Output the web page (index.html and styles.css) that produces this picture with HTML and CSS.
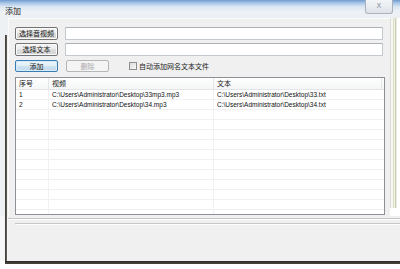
FILE: index.html
```html
<!DOCTYPE html>
<html lang="zh">
<head>
<meta charset="utf-8">
<link rel="stylesheet" href="styles.css">
</head>
<body>
<div class="screen">
  <div class="titlebar">
    <span class="title">添加</span>
    <div class="close">X</div>
  </div>
  <div class="body-row">
    <div class="frame-left"><div class="edge"></div></div>
    <div class="client">
      <div class="row">
        <div class="btn">选择音视频</div>
        <div class="input"></div>
      </div>
      <div class="row">
        <div class="btn">选择文本</div>
        <div class="input"></div>
      </div>
      <div class="row row-actions">
        <div class="btn btn-focus">添加</div>
        <div class="btn btn-disabled">删除</div>
        <label class="check"><span class="box"></span><span>自动添加网名文本文件</span></label>
      </div>
      <div class="table">
        <div class="thead">
          <div class="c1">序号</div>
          <div class="c2">视频</div>
          <div class="c3">文本</div>
        </div>
        <div class="tbody">
          <div class="tr"><div class="c1">1</div><div class="c2">C:\Users\Administrator\Desktop\33mp3.mp3</div><div class="c3">C:\Users\Administrator\Desktop\33.txt</div></div>
          <div class="tr"><div class="c1">2</div><div class="c2">C:\Users\Administrator\Desktop\34.mp3</div><div class="c3">C:\Users\Administrator\Desktop\34.txt</div></div>
          <div class="tr"><div class="c1"></div><div class="c2"></div><div class="c3"></div></div>
          <div class="tr"><div class="c1"></div><div class="c2"></div><div class="c3"></div></div>
          <div class="tr"><div class="c1"></div><div class="c2"></div><div class="c3"></div></div>
          <div class="tr"><div class="c1"></div><div class="c2"></div><div class="c3"></div></div>
          <div class="tr"><div class="c1"></div><div class="c2"></div><div class="c3"></div></div>
          <div class="tr"><div class="c1"></div><div class="c2"></div><div class="c3"></div></div>
          <div class="tr"><div class="c1"></div><div class="c2"></div><div class="c3"></div></div>
          <div class="tr"><div class="c1"></div><div class="c2"></div><div class="c3"></div></div>
          <div class="tr"><div class="c1"></div><div class="c2"></div><div class="c3"></div></div>
          <div class="tr"><div class="c1"></div><div class="c2"></div><div class="c3"></div></div>
          <div class="tr"><div class="c1"></div><div class="c2"></div><div class="c3"></div></div>
        </div>
      </div>
    </div>
    <div class="frame-right"></div>
  </div>
  <div class="bottom-row">
    <div class="frame-left"><div class="edge"></div></div>
    <div class="panel">
      <div class="sep sep1"></div>
      <div class="sep sep2"></div>
    </div>
  </div>
  <div class="dark-edge"></div>
</div>
</body>
</html>
```
FILE: styles.css
```css
* { box-sizing: border-box; margin: 0; padding: 0; }
html, body { width: 400px; height: 269px; overflow: hidden; background: #fff; }
body { font-family: "Noto Sans CJK SC", "Noto Sans", sans-serif; color: #1a1a1a; }

.screen { display: flex; flex-direction: column; width: 400px; height: 269px; }

.titlebar {
  height: 18px; flex: none;
  display: flex; justify-content: space-between; align-items: flex-start;
  padding-left: 5px;
  background: linear-gradient(#6f9bd0 0, #a9c6e6 3px, #dde8f4 7px, #eef2f7 12px, #eceff3 18px);
}
.title { font-size: 8px; line-height: 8px; margin-top: 7px; color: #222; }
.close {
  width: 28px; height: 14px; margin-right: 7px; margin-top: 0;
  border: 1px solid #aab2be; border-top: none; border-radius: 0 0 3px 3px;
  background: linear-gradient(#f2f4f7, #dfe3e9);
  font-family: "DejaVu Sans", sans-serif; font-size: 7px; line-height: 13px;
  text-align: center; color: #8a94a2;
}

.body-row { display: flex; height: 198px; flex: none; }
.frame-left { width: 8px; flex: none; background: #eef1f4; padding-left: 5px; }
.body-row .frame-left { padding-top: 17px; }
.edge { width: 2px; height: 100%; background: linear-gradient(to right, #3a352f, #6a645c); }

.client {
  width: 382px; flex: none;
  background: #f0f0f0;
  border-top: 1px solid #fcfcfc; border-left: 1px solid #fafafa;
  padding: 8px 0 0 6px;
  display: flex; flex-direction: column;
}
.frame-right {
  flex: 1; height: 190px;
  background: linear-gradient(to right, #dcdcdc 0 1px, #f7f7f2 1px 3px, #dedfc8 3px 4px, #f1f1e6 4px 5px, #c8cfb6 5px 6px, #e9ebdf 6px 7px, #ffffff 7px);
}

.row { display: flex; align-items: center; height: 13px; margin-bottom: 3px; }
.row .btn { margin-right: 7px; }
.row-actions { height: 12px; margin-top: 1px; margin-bottom: 5px; }
.row-actions .btn { height: 12px; line-height: 10px; margin-right: 8px; }

.btn {
  width: 43px; height: 13px; flex: none;
  border: 1px solid #747474; border-radius: 2px;
  background: linear-gradient(#f4f4f4 0, #ececec 50%, #dedede 50%, #d2d2d2 100%);
  font-size: 7px; line-height: 11px; text-align: center; color: #151515;
  box-shadow: inset 0 0 0 1px #fafafa;
}
.btn-focus {
  border-color: #3b7db2;
  background: linear-gradient(#eef6fb 0, #e2eef7 50%, #cfe2f0 50%, #c3dbee 100%);
  box-shadow: inset 0 0 0 1px #d6ecfa;
}
.btn-disabled {
  border-color: #b3b7ba; background: #f4f4f4; color: #a9a9a9; box-shadow: none;
}
.input {
  width: 318px; height: 13px;
  border: 1px solid #c3c9cf; border-top-color: #abb0b6; background: #fff; border-radius: 1px;
}

.check { display: flex; align-items: center; margin-left: 12px; font-size: 7px; line-height: 9px; color: #1a1a1a; }
.box {
  width: 8px; height: 8px; margin-right: 2px;
  border: 1px solid #8e8f8f;
  background: linear-gradient(135deg, #dcdcdc, #f8f8f8);
}

.table {
  width: 370px; height: 138px;
  border: 1px solid #8c9097; background: #fff;
  display: flex; flex-direction: column; overflow: hidden;
}
.thead {
  height: 12px; flex: none; display: flex;
  background: linear-gradient(#ffffff, #f5f6f7);
  border-bottom: 1px solid #e3e5e8;
  font-size: 7px; line-height: 11px;
}
.thead > div { border-right: 1px solid #e3e5e8; padding-left: 3px; }
.thead .c3 { margin-right: 2px; }
.c1 { width: 33px; flex: none; padding-left: 3px; }
.c2 { width: 165px; flex: none; padding-left: 3px; }
.c3 { flex: 1; padding-left: 3px; }
.thead .c1 { padding-left: 3px; }

.tbody { flex: 1; overflow: hidden; }
.tr {
  height: 10px; display: flex;
  border-bottom: 1px solid #f1f1f1;
  font-family: "Liberation Sans", Arial, sans-serif; font-size: 6.5px; line-height: 10px; color: #111;
}
.tr > div { border-right: 1px solid #f1f1f1; white-space: nowrap; overflow: hidden; }
.tr .c3 { border-right: none; }

.bottom-row { display: flex; height: 45px; flex: none; }
.bottom-row .frame-left { background: #f4f5f6; }
.panel {
  flex: 1; background: #f0f0f0;
  padding-top: 2px; padding-left: 7px;
  display: flex; flex-direction: column;
}
.sep { height: 2px; border-top: 1px solid #c6c6c6; border-bottom: 1px solid #fcfcfc; }
.sep1 { margin-left: -7px; }
.sep2 { margin-top: 3px; }

.dark-edge {
  height: 3px; flex: none; margin-left: 5px;
  background: linear-gradient(#2e2a25, #4a453e);
}
```
